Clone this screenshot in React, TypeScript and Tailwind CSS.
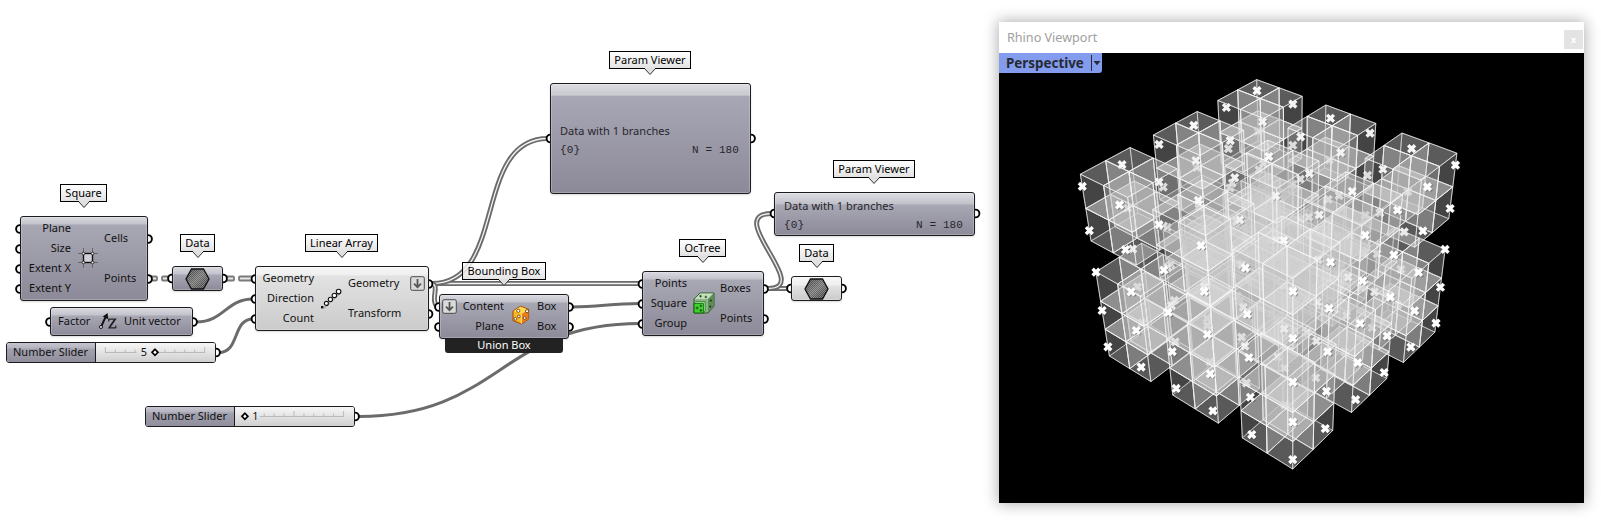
import type { ReactNode } from 'react';

/* ---------- 3D view ---------- */

type Vec = [number, number, number];
const M = [0.112869, 0.093818, -0.002465, -0.803031, 0.055532, -0.069169, -0.140566, 0.430214, -0.015145, 0.019117, -0.022931];
const VX = 999;
const VY = 53;

function depth([a, b, c]: Vec) {
  return M[8] * a + M[9] * b + M[10] * c + 1;
}

function project(p: Vec): [number, number] {
  const [a, b, c] = p;
  const w = depth(p);
  return [
    1270 - VX + (200 * (M[0] * a + M[1] * b + M[2] * c + M[3])) / w,
    270 - VY + (200 * (M[4] * a + M[5] * b + M[6] * c + M[7])) / w,
  ];
}

const path = (pts: Vec[]) =>
  'M' + pts.map((p) => project(p).map((v) => v.toFixed(1)).join(' ')).join('L') + 'Z';

interface Cell {
  o: Vec;
  size: number;
  point: Vec;
}

function buildCells(): Cell[] {
  const plan = [0, 1.6, 3.2, 4.8, 6.4, 8];
  const height = [0.35, 1.675, 2.99, 4.325, 5.65];
  const cells: Cell[] = [];
  const slot = (v: number) => Math.min(7, Math.floor(v));
  for (const a of plan)
    for (const b of plan)
      for (const c of height) {
        const idx: Vec = [slot(a), slot(b), slot(c)];
        const single = [3, 4].includes(idx[0]) && [3, 4].includes(idx[1]) && idx[2] === 2;
        const size = single ? 2 : 1;
        const o = idx.map((i) => Math.floor(i / size) * size) as Vec;
        cells.push({ o, size, point: [a, b, c] });
      }
  const mid = (k: Cell): Vec => [k.o[0] + k.size / 2, k.o[1] + k.size / 2, k.o[2] + k.size / 2];
  return cells.sort((p, q) => depth(mid(q)) - depth(mid(p)));
}

const CELLS = buildCells();

function Cross({ at }: { at: Vec }) {
  const [x, y] = project(at);
  const d = `M${x - 3.4} ${y - 3.4}l6.8 6.8m0 -6.8l-6.8 6.8`;
  return (
    <>
      <path d={d} transform="translate(1 .8)" stroke="#333" strokeOpacity=".4" strokeWidth="3" />
      <path d={d} stroke="#fff" strokeWidth="3.4" />
    </>
  );
}

function Box({ cell }: { cell: Cell }) {
  const [x, y, z] = cell.o;
  const s = cell.size;
  const X = x + s;
  const Y = y + s;
  const Z = z + s;
  const side = 'rgb(190 190 190 / .2)';
  const flat = 'rgb(236 236 236 / .27)';
  const onFront = cell.point[0] === 8 || cell.point[1] === 0;
  return (
    <g fill="none" strokeLinejoin="round">
      <g stroke="rgb(250 250 250 / .5)" strokeWidth="1">
        <path fill={flat} d={path([[x, y, z], [X, y, z], [X, Y, z], [x, Y, z]])} />
        <path fill={side} d={path([[x, y, z], [x, Y, z], [x, Y, Z], [x, y, Z]])} />
        <path fill={side} d={path([[x, Y, z], [X, Y, z], [X, Y, Z], [x, Y, Z]])} />
      </g>
      {!onFront && <Cross at={cell.point} />}
      <g stroke="rgb(250 250 250 / .58)" strokeWidth="1">
        <path fill={side} d={path([[x, y, z], [X, y, z], [X, y, Z], [x, y, Z]])} />
        <path fill={side} d={path([[X, y, z], [X, Y, z], [X, Y, Z], [X, y, Z]])} />
        <path fill={flat} d={path([[x, y, Z], [X, y, Z], [X, Y, Z], [x, Y, Z]])} />
      </g>
      {onFront && <Cross at={cell.point} />}
    </g>
  );
}

function Viewport() {
  return (
    <section className="absolute left-[999px] top-[22px] flex h-[481px] w-[585px] flex-col bg-white shadow-[0_0_14px_1px_rgba(0,0,0,0.32)]">
      <header className="flex h-[31px] items-center justify-between pl-2 pr-px">
        <span className="mt-px text-[12.6px] leading-none text-[#a0a0a0]">Rhino Viewport</span>
        <button className="mt-[4px] flex h-[19px] w-[19px] items-center justify-center bg-[#e3e3e3] text-[9px] leading-none font-bold text-white">x</button>
      </header>
      <div className="relative grow overflow-hidden bg-black">
        <svg className="block h-[450px] w-[585px]" viewBox="0 0 585 450">
          {CELLS.map((c, i) => (
            <Box key={i} cell={c} />
          ))}
        </svg>
        <div className="absolute left-0 top-0 flex h-5 w-[103px] items-center rounded-br-[3px] bg-[#839cee] pl-[7px]">
          <span className="w-[85px] pt-px text-[13.4px] leading-none font-bold text-[#262a33]">Perspective</span>
          <span className="h-4 w-px bg-[#262a33]" />
          <svg className="ml-px" width="8" height="5" viewBox="0 0 8 5"><path d="M.5 0h7L4 4.2z" fill="#262a33" /></svg>
        </div>
      </div>
    </section>
  );
}

/* ---------- node graph ---------- */

const PURPLE = 'bg-[linear-gradient(180deg,#d9d9e0_0px,#c3c3cc_7px,#a8a7b4_8px,#8c8a98_100%)]';
const LIGHT = 'bg-[linear-gradient(180deg,#f6f6f6_0px,#efefef_8px,#e2e2e2_9px,#cbcbcb_100%)]';
const TALL = 'bg-[linear-gradient(180deg,#dedee2_0px,#c9c9d1_10px,#d2d2d9_11px,#a8a7b5_12px,#8c8a98_100%)]';
const PAPER = 'bg-[linear-gradient(180deg,#ffffff,#e2e2e2)]';
const GLASS = 'bg-[linear-gradient(180deg,rgba(255,255,255,0.8),rgba(226,226,226,0.92))]';

function Tag({ className, fill = PAPER, children }: { className: string; fill?: string; children: string }) {
  return (
    <div className={`absolute flex h-[18px] items-center justify-center border border-black ${fill} ${className}`}>
      <span className="pb-[2px] text-[11px] leading-none whitespace-nowrap text-black">{children}</span>
      <svg className="absolute left-1/2 top-[15.5px] -ml-[6px]" width="12" height="8" viewBox="0 0 12 8">
        <path d="M1 0h10v1.2L6 6.5L1 1.2z" fill="#e0e0e0" />
        <path d="M1 1L6 6.5L11 1" fill="none" stroke="#333" />
      </svg>
    </div>
  );
}

function Node({ className, children }: { className: string; children?: ReactNode }) {
  return (
    <div className={`absolute flex rounded-[3px] border border-[#1c1c1f] shadow-[inset_0_0_0_1px_rgba(255,255,255,0.22),0_1px_2px_rgba(0,0,0,0.15)] ${className}`}>
      {children}
    </div>
  );
}

function Labels({ className, items }: { className: string; items: string[] }) {
  return (
    <div className={`flex flex-col ${className}`}>
      {items.map((t, i) => (
        <span key={i} className="flex h-5 items-center pb-[3px] text-[11px] leading-none whitespace-nowrap">{t}</span>
      ))}
    </div>
  );
}

function HexIcon({ id }: { id: string }) {
  return (
    <svg width="25" height="22" viewBox="0 0 25 22">
      <defs>
        <linearGradient id={id} x1="0" y1="0" x2="1" y2="1">
          <stop offset="0" stopColor="#333" />
          <stop offset=".5" stopColor="#707070" />
          <stop offset="1" stopColor="#2c2c2c" />
        </linearGradient>
        <pattern id={id + 'p'} width="2" height="2" patternUnits="userSpaceOnUse">
          <path d="M0 0h1v1H0zM1 1h1v1H1z" fill="#ccc" fillOpacity=".45" />
        </pattern>
      </defs>
      <path d="M6.5 1h12l5.5 10-5.5 10h-12L1 11z" fill={`url(#${id})`} />
      <path d="M6.5 1h12l5.5 10-5.5 10h-12L1 11z" fill={`url(#${id}p)`} stroke="#111" strokeWidth="1.3" />
    </svg>
  );
}

function DownArrow() {
  return (
    <svg width="15" height="15" viewBox="0 0 15 15">
      <rect x=".7" y=".7" width="13.6" height="13.6" rx="1.5" fill="#dadada" stroke="#4a4a4a" />
      <path d="M7.5 3v8M4 7.6l3.5 3.6L11 7.6" fill="none" stroke="#555" strokeWidth="1.8" />
    </svg>
  );
}

function SquareIcon() {
  return (
    <svg width="20" height="20" viewBox="0 0 20 20">
      <path d="M5.5 0v20M14.5 0v20M0 5.5h20M0 14.5h20" stroke="#333" strokeOpacity=".5" />
      <rect x="5.5" y="5.5" width="9" height="9" fill="#d0d0d8" stroke="#111" strokeWidth="1.4" />
      <g fill="#fff" stroke="#111" strokeWidth=".8">
        <circle cx="5.5" cy="5.5" r="1.3" /><circle cx="14.5" cy="5.5" r="1.3" />
        <circle cx="5.5" cy="14.5" r="1.3" /><circle cx="14.5" cy="14.5" r="1.3" />
      </g>
    </svg>
  );
}

function VectorIcon() {
  return (
    <svg width="18" height="18" viewBox="0 0 18 18">
      <path d="M2 14L7 3" stroke="#111" strokeWidth="1.9" />
      <path d="M8.6 0L9.2 6.2 3.8 3.6z" fill="#111" />
      <circle cx="2" cy="14" r="1.5" fill="#fff" stroke="#111" />
      <path d="M9.6 6.2h7L10 14.8h7M9.8 6v2.4M16.8 15v-2.6" fill="none" stroke="#222" strokeWidth="1.2" />
      <path d="M15.6 6.8L10.6 14.2" stroke="#222" strokeWidth="1.6" />
    </svg>
  );
}

function ArrayIcon() {
  return (
    <svg width="22" height="22" viewBox="0 0 22 22">
      <path d="M4 20L20 5" stroke="#777" strokeOpacity=".4" strokeWidth="2" />
      <rect x="1" y="18" width="2.4" height="2.4" fill="#111" />
      <g fill="#fff" stroke="#111" strokeWidth="1.1">
        <circle cx="6.4" cy="15.4" r="2" /><circle cx="10.4" cy="11.4" r="2.1" />
        <circle cx="14.4" cy="7.4" r="2.2" /><circle cx="18.6" cy="3.6" r="2.3" />
      </g>
    </svg>
  );
}

function DiceIcon() {
  return (
    <svg width="18" height="20" viewBox="0 0 18 20">
      <path d="M1 6L8.4 1.2l8.2 3V14l-7 5L1 15.6z" fill="#f9b91c" stroke="#a34a08" strokeWidth="1" />
      <path d="M9.4 9.2l6.9-4.4V14l-6.9 4.6z" fill="#ea7d1c" />
      <path d="M1.6 6L8.4 1.7l7.8 2.9-6.8 4.4z" fill="#ffd84f" />
      <path d="M9.4 9v9.6" stroke="#fff3b0" strokeWidth=".8" />
      <g fill="#fff" stroke="#6b3204" strokeWidth=".8">
        <circle cx="6.3" cy="5.8" r="1.6" /><circle cx="15" cy="6.2" r="1.6" />
        <circle cx="3.4" cy="13.8" r="1.4" /><circle cx="6.8" cy="11.4" r="1.3" /><circle cx="12.8" cy="13" r="1.4" />
      </g>
    </svg>
  );
}

function OcTreeIcon() {
  return (
    <svg width="22" height="22" viewBox="0 0 22 22">
      <path d="M1 7L7 1h14v13l-6 7H1z" fill="#8fb08a" stroke="#2a5a26" strokeWidth="1" />
      <path d="M1.5 7L7.2 1.5h13.3L15 7z" fill="#c5e0be" />
      <path d="M15 7l5.5-5.5V14L15 20.4z" fill="#5f8a5a" />
      <path d="M1 11.5h9.5V21H1z" fill="#3fd52c" stroke="#116010" />
      <path d="M1 11.5l1.8-1.8h9.4v8.8L10.5 21v-9.5z" fill="#8cf07c" stroke="#116010" strokeWidth=".6" />
      <g stroke="#174a14" strokeWidth=".9">
        <path d="M2.6 16h3M4.1 14.5v3M6.4 18.4h3M7.9 16.9v3M6.6 13.8h2.6M7.9 12.5v2.6M6.3 4.2h2.6M7.6 2.9v2.6M11.6 5h2.6M12.9 3.7v2.6M16.6 8.6h2.4M17.8 7.3v2.6M16 14.6h2.4M17.2 13.3v2.6" />
      </g>
    </svg>
  );
}

function Slider({ className, value, at }: { className: string; value: number; at: number }) {
  const low = at < 50;
  return (
    <div className={`absolute flex h-[21px] w-[210px] overflow-hidden rounded-[3px] border border-[#1c1c1f] ${className}`}>
      <div className="flex w-[89px] shrink-0 items-center border-r border-[#1c1c1f] bg-[linear-gradient(180deg,#c6c6cf_0px,#b4b3bf_5px,#a2a1ae_6px,#908e9c_100%)] pl-[6px]">
        <span className="pb-[2px] text-[11px] leading-none whitespace-nowrap">Number Slider</span>
      </div>
      <svg className="block bg-[linear-gradient(180deg,#f7f7f7,#cfcfcf)]" width="120" height="19" viewBox="0 0 120 19">
        <g stroke="#b9b9b9" strokeWidth="1">
          <path d={low ? 'M25 9.5h85' : 'M9 9.5h32M60 9.5h50'} />
          {Array.from({ length: 11 }, (_, i) => i)
            .filter((i) => (low ? i > 1 : i !== 4 && i !== 5))
            .map((i) => (
              <path key={i} d={`M${9.5 + i * 10} ${i % 5 ? 6.5 : 4}v${i % 5 ? 3 : 5.5}`} />
            ))}
        </g>
        <path d={`M${at} 6.2l3 3.1-3 3.1-3-3.1z`} fill="#fff" stroke="#000" strokeWidth="1.7" />
        <text x={low ? 17.5 : 45} y="13.2" fontSize="11" fill="#111">{value}</text>
      </svg>
    </div>
  );
}

const PORTS: [number, number][] = [
  [20, 229], [20, 249], [20, 269], [20, 289], [148, 239], [148, 279],
  [172, 278.5], [223, 278.5],
  [50, 322], [193, 322], [216, 352.5], [355, 416.5],
  [255.5, 279], [255.5, 299], [255.5, 319], [428.5, 284], [428.5, 314],
  [439, 307], [439, 327], [569, 307], [569, 327],
  [642.5, 284], [642.5, 304], [642.5, 324], [764, 289], [764, 319],
  [791, 288.5], [842, 288.5],
  [550.5, 138.5], [751, 138.5], [774.5, 213.5], [975.5, 213.5],
];

const DOUBLE = [
  'M432 283.5H640',
  'M432 283.5C508 283.5 472 138.5 548 138.5',
  'M432 284C440 285 430 300 437 306.5',
  'M768 288.5H788',
  'M768 288.5C814 288.5 722 213.5 772 213.5',
];
const SINGLE = [
  'M196 322C224 322 226 299 253 299',
  'M219 352.5C240 352.5 232 319 253 319',
  'M572 307C600 307 610 303.5 640 303.5',
  'M359 416.5C500 416.5 500 323.5 640 323.5',
];

function Wires() {
  return (
    <svg className="absolute left-0 top-0" width="998" height="522" viewBox="0 0 998 522" fill="none">
      {SINGLE.map((d) => <path key={d} d={d} stroke="#6b6b6b" strokeWidth="3" />)}
      {DOUBLE.map((d) => (
        <g key={d}>
          <path d={d} stroke="#6b6b6b" strokeWidth="5" />
          <path d={d} stroke="#f2f2f2" strokeWidth="1.3" />
        </g>
      ))}
      <g stroke="#7a7a7a" fill="#e8e8e8" strokeWidth="1.8">
        <path d="M151 276.5h5q1 0 1 1v2q0 1-1 1h-5M169 276.5h-6q-1 0-1 1v2q0 1 1 1h6" />
        <path d="M226 276.5h7q1 0 1 1v2q0 1-1 1h-7M253 276.5h-13q-1 0-1 1v2q0 1 1 1h13" />
      </g>
      {PORTS.map(([x, y]) => (
        <circle key={`${x}-${y}`} cx={x} cy={y} r="3.9" fill="#fff" stroke="#000" strokeWidth="1.9" />
      ))}
    </svg>
  );
}

function Viewer({ className, pad }: { className: string; pad: string }) {
  return (
    <Node className={`w-[201px] flex-col pl-[9px] pr-[11px] text-[#26262b] ${className}`}>
      <span className={`text-[11px] leading-none tracking-[0.04px] ${pad}`}>Data with 1 branches</span>
      <div className="mt-[9px] flex justify-between font-['Liberation_Mono',monospace] text-[11px] leading-none tracking-[0.1px]">
        <span>{'{0}'}</span>
        <span className="whitespace-pre">N = 180</span>
      </div>
    </Node>
  );
}

export default function App() {
  return (
    <main className="relative h-[522px] w-[1601px] overflow-hidden bg-white font-['Noto_Sans','Open_Sans',sans-serif] text-[#111]">
      <Wires />
      <Tag className="left-[462px] top-[262px] w-[84px]" fill={GLASS}>Bounding Box</Tag>

      <Tag className="left-[60px] top-[184px] w-[47px]">Square</Tag>
      <Node className={`left-[20px] top-[216px] h-[85px] w-[128px] ${PURPLE}`}>
        <Labels className="w-[50px] items-end pt-[2px]" items={['Plane', 'Size', 'Extent X', 'Extent Y']} />
        <div className="flex w-[33px] items-center justify-center pb-px"><SquareIcon /></div>
        <div className="flex flex-col pt-[12px]">
          <Labels className="h-10" items={['Cells']} />
          <Labels className="" items={['Points']} />
        </div>
      </Node>

      <Tag className="left-[180px] top-[234px] w-[35px]">Data</Tag>
      <Node className={`left-[172px] top-[266px] h-[25px] w-[51px] items-center justify-center ${PURPLE}`}><HexIcon id="h1" /></Node>

      <Node className={`left-[50px] top-[307px] h-[29px] w-[143px] items-center pl-[7px] ${PURPLE}`}>
        <span className="w-[41px] pb-[2px] text-[11px] leading-none">Factor</span>
        <span className="w-[25px]"><VectorIcon /></span>
        <span className="pb-[2px] text-[11px] leading-none whitespace-nowrap">Unit vector</span>
      </Node>

      <Slider className="left-[6px] top-[342px]" value={5} at={59.5} />
      <Slider className="left-[145px] top-[406px]" value={1} at={10} />

      <Tag className="left-[305px] top-[234px] w-[73px]">Linear Array</Tag>
      <Node className={`left-[255px] top-[266px] h-[65px] w-[174px] ${LIGHT}`}>
        <Labels className="w-[58px] items-end pt-[2px]" items={['Geometry', 'Direction', 'Count']} />
        <div className="flex w-[34px] items-center justify-center"><ArrayIcon /></div>
        <div className="flex w-[62px] flex-col pt-[7px]">
          <Labels className="h-[30px]" items={['Geometry']} />
          <Labels className="" items={['Transform']} />
        </div>
        <div className="pt-[9px]"><DownArrow /></div>
      </Node>

      <Node className={`left-[439px] top-[294px] h-[45px] w-[130px] ${PURPLE}`}>
        <div className="pl-[2px] pt-[4px]"><DownArrow /></div>
        <Labels className="w-[47px] items-end pt-[2px]" items={['Content', 'Plane']} />
        <div className="flex w-[33px] items-center justify-center pb-[3px]"><DiceIcon /></div>
        <Labels className="pt-[2px]" items={['Box', 'Box']} />
      </Node>
      <div className="absolute left-[445px] top-[339px] flex h-[14px] w-[118px] items-center justify-center rounded-b-[3px] bg-[#222] pb-[3px] text-[11px] leading-none text-white">
        Union Box
      </div>

      <Tag className="left-[679px] top-[239px] w-[47px]">OcTree</Tag>
      <Node className={`left-[642px] top-[271px] h-[65px] w-[122px] ${PURPLE}`}>
        <Labels className="w-[44px] items-end pt-[2px]" items={['Points', 'Square', 'Group']} />
        <div className="flex w-[33px] items-center justify-center pb-[2px]"><OcTreeIcon /></div>
        <div className="flex flex-col pt-[7px]">
          <Labels className="h-[30px]" items={['Boxes']} />
          <Labels className="" items={['Points']} />
        </div>
      </Node>

      <Tag className="left-[799px] top-[244px] w-[35px]">Data</Tag>
      <Node className={`left-[791px] top-[276px] h-[25px] w-[51px] items-center justify-center ${LIGHT}`}><HexIcon id="h2" /></Node>

      <Tag className="left-[609px] top-[51px] w-[82px]">Param Viewer</Tag>
      <Viewer className={`left-[550px] top-[83px] h-[111px] ${TALL}`} pad="mt-[41px]" />

      <Tag className="left-[833px] top-[160px] w-[82px]">Param Viewer</Tag>
      <Viewer className={`left-[774px] top-[192px] h-[44px] bg-[linear-gradient(180deg,#dedee4_0px,#c0c0c9_11px,#a8a7b4_12px,#8c8a98_100%)]`} pad="mt-[7px]" />

      <Viewport />
    </main>
  );
}
